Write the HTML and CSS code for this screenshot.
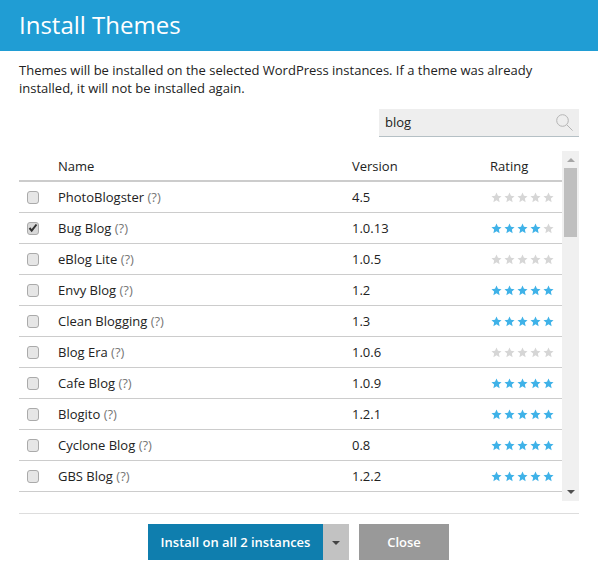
FILE: index.html
```html
<!DOCTYPE html>
<html lang="en">
<head>
    <meta charset="UTF-8">
    <title>Install Themes</title>
    <link rel="stylesheet" href="styles.css">
</head>
<body>
    <svg class="defs" width="0" height="0">
        <symbol id="star" viewBox="0 0 12 12">
            <path d="M6 .6l1.6 3.6 3.9.4-2.9 2.6.8 3.9L6 9.1l-3.4 2 .8-3.9L.5 4.6l3.9-.4z"/>
        </symbol>
    </svg>

    <div class="dialog">
        <h1 class="title">Install Themes</h1>
        <div class="content">
            <p class="intro">Themes will be installed on the selected WordPress instances. If a theme was already installed, it will not be installed again.</p>

            <div class="search">
                <span class="search-text">blog</span>
                <svg class="search-icon" width="17" height="17" viewBox="0 0 17 17">
                    <circle cx="6.5" cy="6.5" r="5.8"/>
                    <path d="M10.8 10.8l5.8 5.8"/>
                </svg>
            </div>

            <div class="list">
                <table class="themes">
                    <thead>
                        <tr><th class="col-check"></th><th class="col-name">Name</th><th class="col-version">Version</th><th class="col-rating">Rating</th></tr>
                    </thead>
                    <tbody>
                        <tr>
                            <td><input type="checkbox"></td>
                            <td>PhotoBlogster <span class="help">(?)</span></td>
                            <td>4.5</td>
                            <td><span class="stars"><svg><use href="#star"/></svg><svg><use href="#star"/></svg><svg><use href="#star"/></svg><svg><use href="#star"/></svg><svg><use href="#star"/></svg></span></td>
                        </tr>
                        <tr>
                            <td><input type="checkbox" checked></td>
                            <td>Bug Blog <span class="help">(?)</span></td>
                            <td>1.0.13</td>
                            <td><span class="stars"><svg class="on"><use href="#star"/></svg><svg class="on"><use href="#star"/></svg><svg class="on"><use href="#star"/></svg><svg class="on"><use href="#star"/></svg><svg><use href="#star"/></svg></span></td>
                        </tr>
                        <tr>
                            <td><input type="checkbox"></td>
                            <td>eBlog Lite <span class="help">(?)</span></td>
                            <td>1.0.5</td>
                            <td><span class="stars"><svg><use href="#star"/></svg><svg><use href="#star"/></svg><svg><use href="#star"/></svg><svg><use href="#star"/></svg><svg><use href="#star"/></svg></span></td>
                        </tr>
                        <tr>
                            <td><input type="checkbox"></td>
                            <td>Envy Blog <span class="help">(?)</span></td>
                            <td>1.2</td>
                            <td><span class="stars"><svg class="on"><use href="#star"/></svg><svg class="on"><use href="#star"/></svg><svg class="on"><use href="#star"/></svg><svg class="on"><use href="#star"/></svg><svg class="on"><use href="#star"/></svg></span></td>
                        </tr>
                        <tr>
                            <td><input type="checkbox"></td>
                            <td>Clean Blogging <span class="help">(?)</span></td>
                            <td>1.3</td>
                            <td><span class="stars"><svg class="on"><use href="#star"/></svg><svg class="on"><use href="#star"/></svg><svg class="on"><use href="#star"/></svg><svg class="on"><use href="#star"/></svg><svg class="on"><use href="#star"/></svg></span></td>
                        </tr>
                        <tr>
                            <td><input type="checkbox"></td>
                            <td>Blog Era <span class="help">(?)</span></td>
                            <td>1.0.6</td>
                            <td><span class="stars"><svg><use href="#star"/></svg><svg><use href="#star"/></svg><svg><use href="#star"/></svg><svg><use href="#star"/></svg><svg><use href="#star"/></svg></span></td>
                        </tr>
                        <tr>
                            <td><input type="checkbox"></td>
                            <td>Cafe Blog <span class="help">(?)</span></td>
                            <td>1.0.9</td>
                            <td><span class="stars"><svg class="on"><use href="#star"/></svg><svg class="on"><use href="#star"/></svg><svg class="on"><use href="#star"/></svg><svg class="on"><use href="#star"/></svg><svg class="on"><use href="#star"/></svg></span></td>
                        </tr>
                        <tr>
                            <td><input type="checkbox"></td>
                            <td>Blogito <span class="help">(?)</span></td>
                            <td>1.2.1</td>
                            <td><span class="stars"><svg class="on"><use href="#star"/></svg><svg class="on"><use href="#star"/></svg><svg class="on"><use href="#star"/></svg><svg class="on"><use href="#star"/></svg><svg class="on"><use href="#star"/></svg></span></td>
                        </tr>
                        <tr>
                            <td><input type="checkbox"></td>
                            <td>Cyclone Blog <span class="help">(?)</span></td>
                            <td>0.8</td>
                            <td><span class="stars"><svg class="on"><use href="#star"/></svg><svg class="on"><use href="#star"/></svg><svg class="on"><use href="#star"/></svg><svg class="on"><use href="#star"/></svg><svg class="on"><use href="#star"/></svg></span></td>
                        </tr>
                        <tr>
                            <td><input type="checkbox"></td>
                            <td>GBS Blog <span class="help">(?)</span></td>
                            <td>1.2.2</td>
                            <td><span class="stars"><svg class="on"><use href="#star"/></svg><svg class="on"><use href="#star"/></svg><svg class="on"><use href="#star"/></svg><svg class="on"><use href="#star"/></svg><svg class="on"><use href="#star"/></svg></span></td>
                        </tr>
                    </tbody>
                </table>
                <div class="scrollbar">
                    <span class="arrow-up"></span>
                    <div class="track"><div class="thumb"></div></div>
                    <span class="arrow-down"></span>
                </div>
            </div>

            <div class="actions">
                <button class="btn btn-install">Install on all 2 instances</button>
                <button class="btn btn-caret" aria-label="More"><span class="caret"></span></button>
                <button class="btn btn-close">Close</button>
            </div>
        </div>
    </div>
</body>
</html>
```

FILE: styles.css
```css
body {
    margin: 0;
    background-color: #fff;
    font-family: "Open Sans", sans-serif;
    font-size: 13px;
    color: #222;
}

.defs {
    display: block;
    height: 0;
}

.title {
    margin: 0;
    height: 51px;
    padding-left: 19px;
    background-color: #209dd4;
    color: #fff;
    font-size: 24px;
    font-weight: 400;
    line-height: 50px;
}

.content {
    padding: 10px 19px 0;
}

.intro {
    margin: 0;
    line-height: 18px;
}

.search {
    display: flex;
    align-items: center;
    justify-content: space-between;
    box-sizing: border-box;
    width: 200px;
    height: 28px;
    margin: 12px 0 0 auto;
    padding: 0 6px 0 6px;
    background-color: #eee;
    border-bottom: 1px solid #b5c0c5;
}

.search-text {
    margin-bottom: 2px;
}

.search-icon {
    fill: none;
    stroke: #b4b4b4;
}

.list {
    display: flex;
    align-items: flex-start;
    height: 350px;
    margin-top: 14px;
}

.themes {
    flex: 1;
    border-collapse: collapse;
    table-layout: fixed;
}

.themes th {
    height: 29px;
    padding: 0;
    border-bottom: 2px solid #ccc;
    font-weight: 400;
    text-align: left;
}

.themes td {
    height: 30px;
    padding: 0;
    border-bottom: 1px solid #ccc;
}

.col-check {
    width: 39px;
}

.col-version {
    width: 138px;
}

.col-rating {
    width: 72px;
}

.themes input {
    appearance: none;
    display: block;
    box-sizing: border-box;
    width: 12px;
    height: 13px;
    margin: 0 0 0 8px;
    background-color: #e6e6e6;
    background-position: center;
    background-repeat: no-repeat;
    border: 1px solid #aaa;
    border-radius: 3px;
}

.themes input:checked {
    background-color: #d8d8d8;
    background-image: url("data:image/svg+xml,%3Csvg xmlns='http://www.w3.org/2000/svg' width='10' height='10'%3E%3Cpath d='M1.5 5l2.2 2.6L8.5 1.5' fill='none' stroke='%23333' stroke-width='2'/%3E%3C/svg%3E");
}

.help {
    color: #777;
}

.stars {
    display: flex;
    gap: 2px;
    margin-left: 1px;
}

.stars svg {
    display: block;
    width: 11px;
    height: 11px;
    fill: #d6d6d6;
}

.stars svg.on {
    fill: #3fb2e8;
}

.scrollbar {
    display: flex;
    flex-direction: column;
    align-items: center;
    width: 17px;
    height: 350px;
    background-color: #f0f0f0;
}

.arrow-up,
.arrow-down {
    flex: none;
    width: 0;
    height: 0;
    border-left: 4px solid transparent;
    border-right: 4px solid transparent;
}

.arrow-up {
    margin: 7px 0 6px;
    border-bottom: 4px solid #a6a6a6;
}

.arrow-down {
    margin: 6px 0 7px;
    border-top: 4px solid #505050;
}

.track {
    flex: 1;
    width: 100%;
}

.thumb {
    width: 13px;
    height: 69px;
    margin: 0 auto;
    background-color: #bfbfbf;
}

.actions {
    display: flex;
    justify-content: center;
    margin-top: 12px;
    padding: 10px 2px 0 0;
    border-top: 1px solid #ddd;
}

.btn {
    height: 36px;
    padding: 0 0 0 1px;
    border: none;
    color: #fff;
    font-family: inherit;
    font-size: 13px;
    font-weight: 600;
}

.btn-install {
    width: 175px;
    background-color: #0f7eae;
}

.btn-caret {
    width: 26px;
    padding: 0;
    background-color: #c2c2c2;
}

.caret {
    display: block;
    width: 0;
    height: 0;
    margin: 2px auto 0;
    border-left: 4px solid transparent;
    border-right: 4px solid transparent;
    border-top: 4px solid #444;
}

.btn-close {
    width: 90px;
    margin-left: 10px;
    background-color: #999;
}
```
